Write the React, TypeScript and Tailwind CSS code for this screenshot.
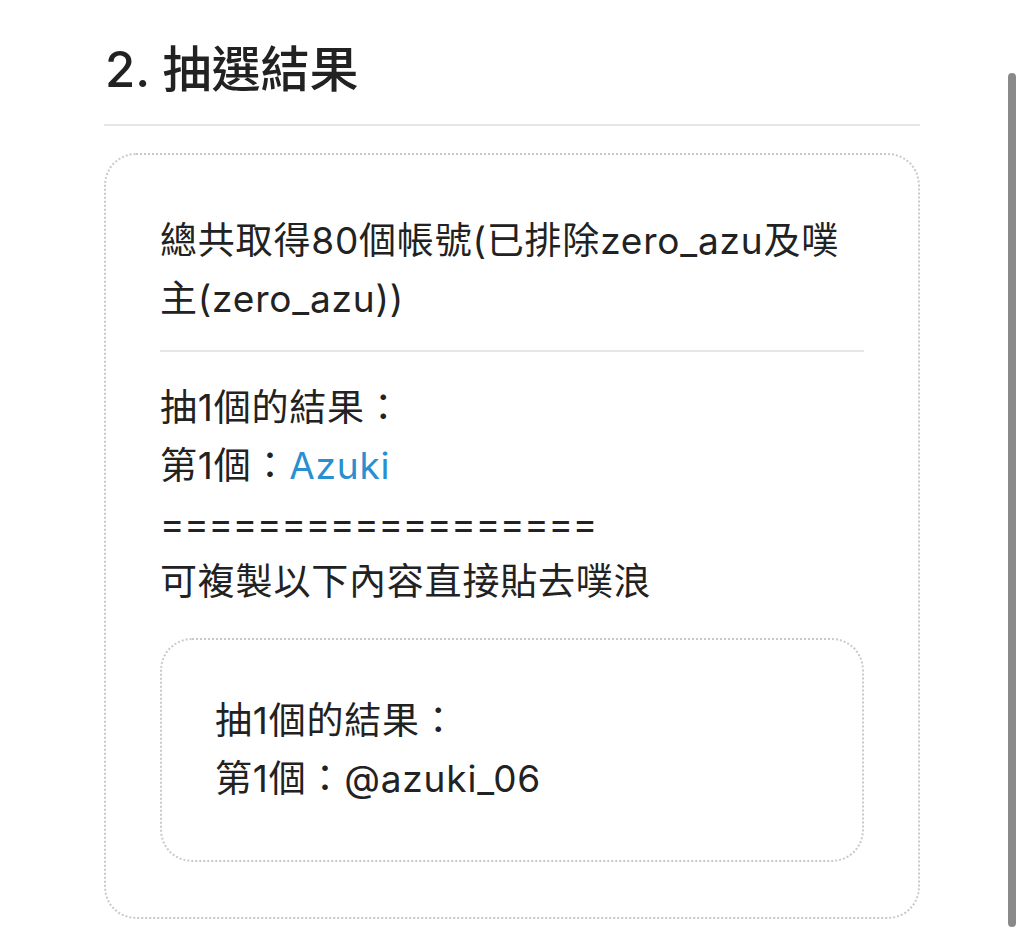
import React from "react";

export default function App() {
  const font = { fontFamily: 'Inter, "Noto Sans CJK TC", sans-serif' };
  return (
    <div className="relative min-h-[930px] w-full overflow-hidden bg-white text-[#222]" style={font}>
      <div className="mx-auto w-[816px] pt-[38px]">
        <h2 className="pl-px text-[49px] font-medium leading-[64px] text-[#222]">2. 抽選結果</h2>
        <div className="mt-[22px] h-[2px] w-full bg-[#e6e6e6]" />
        <div className="mt-[27px] rounded-[32px] border-2 border-dotted border-[#c9c9c9] px-[54px] pb-[55px] pt-[57px] text-[37px] leading-[58px] tracking-[0.8px]">
          <p>總共取得80個帳號(已排除zero_azu及噗主(zero_azu))</p>
          <div className="mb-[27px] mt-[22px] h-[2px] w-full bg-[#e6e6e6]" />
          <p>抽1個的結果：</p>
          <p>
            第1個：<span className="text-[#2a8fd0]">Azuki</span>
          </p>
          <p className="tracking-[-0.2px]">==================</p>
          <p>可複製以下內容直接貼去噗浪</p>
          <div className="mt-[27px] rounded-[32px] border-2 border-dotted border-[#c9c9c9] px-[53px] py-[52px]">
            <p>抽1個的結果：</p>
            <p>第1個：@azuki_06</p>
          </div>
        </div>
      </div>
      <div className="absolute left-[1008px] top-[73px] h-[854px] w-[8px] rounded-full bg-[#8a8a8a]" />
    </div>
  );
}
